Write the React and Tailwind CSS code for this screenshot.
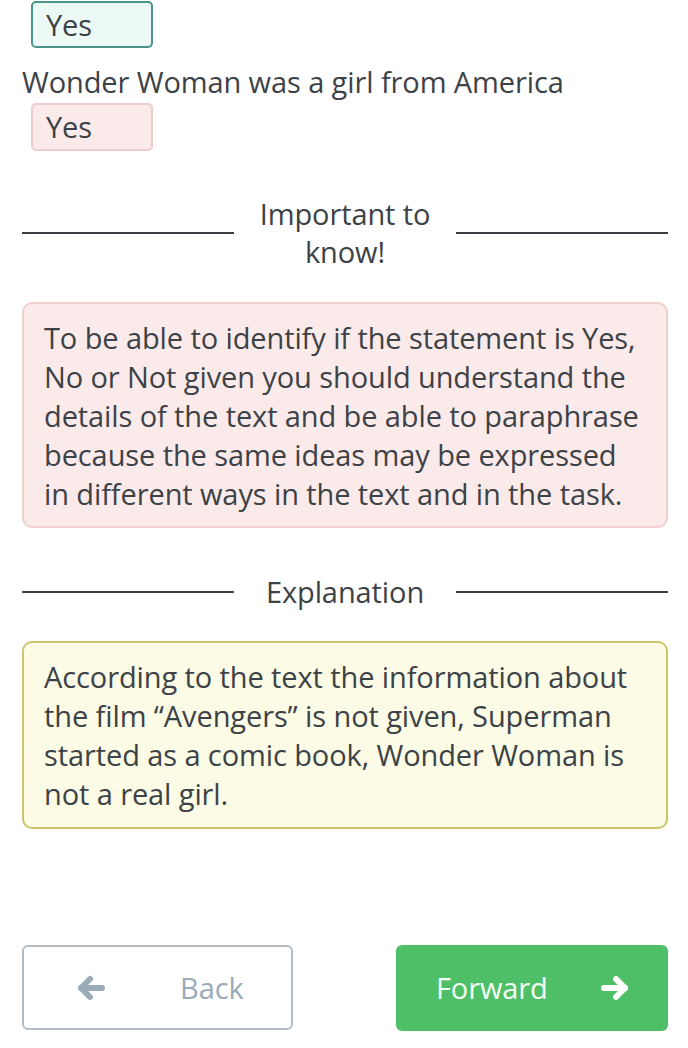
import React from "react";

function Arrow({ dir = "left", className = "" }) {
  return (
    <svg viewBox="0 0 30 26" className={className} fill="none" stroke="currentColor" strokeWidth="6" strokeLinecap="round" strokeLinejoin="round">
      {dir === "left" ? (
        <>
          <path d="M5 13 H26" />
          <path d="M14 4 L5 13 L14 22" />
        </>
      ) : (
        <>
          <path d="M25 13 H4" />
          <path d="M16 4 L25 13 L16 22" />
        </>
      )}
    </svg>
  );
}

function Divider({ children }) {
  return (
    <div className="flex items-center gap-[21px]">
      <div className="h-[2px] flex-1 bg-[#3a3f44]" />
      <div className="w-[180px] text-center text-[29px] leading-[38px] text-[#3d4247]">{children}</div>
      <div className="h-[2px] flex-1 bg-[#3a3f44]" />
    </div>
  );
}

export default function App() {
  return (
    <div
      className="w-[688px] h-[1048px] bg-white overflow-hidden pl-[22px] pr-[20px] text-[#3d4247] tracking-[-0.1px]"
      style={{ fontFamily: '"Open Sans", "Noto Sans", sans-serif' }}
    >
      <div className="ml-[9px] mt-px flex h-[47px] w-[122px] items-center rounded-[5px] border-2 border-[#4a958a] bg-[#ecf9f4] pl-[13px] text-[29px]">
        Yes
      </div>
      <div className="mt-[15px] text-[29px] leading-[38px]">Wonder Woman was a girl from America</div>
      <div className="ml-[9px] mt-[2px] flex h-[48px] w-[122px] items-center rounded-[5px] border-2 border-[#f1cccc] bg-[#fbeaea] pl-[13px] text-[29px]">
        Yes
      </div>

      <div className="mt-[44px]">
        <Divider>Important to know!</Divider>
      </div>

      <div className="mt-[31px] rounded-[10px] border-2 border-[#f1cfcf] bg-[#fbeaea] px-[20px] pt-[14px] pb-[13px] text-[29px] leading-[39px]">
        To be able to identify if the statement is Yes, No or Not given you should understand the details of the text and be able to paraphrase because the same ideas may be expressed in different ways in the text and in the task.
      </div>

      <div className="mt-[45px]">
        <Divider>Explanation</Divider>
      </div>

      <div className="mt-[30px] rounded-[10px] border-2 border-[#cdc46a] bg-[#fbfbe6] px-[20px] pt-[14px] pb-[14px] text-[29px] leading-[39px]">
        According to the text the information about the film “Avengers” is not given, Superman started as a comic book, Wonder Woman is not a real girl.
      </div>

      <div className="mt-[116px] flex justify-between">
        <button className="flex h-[85px] w-[271px] items-center rounded-[6px] border-2 border-[#b3bcc4] bg-white pl-[52px] text-[29px] text-[#9aabb9]">
          <Arrow dir="left" className="h-[26px] w-[30px]" />
          <span className="ml-[74px]">Back</span>
        </button>
        <button className="flex h-[86px] w-[272px] items-center rounded-[6px] bg-[#4fbf67] pl-[40px] text-[29px] text-[#f4fff5]">
          <span>Forward</span>
          <Arrow dir="right" className="ml-[52px] h-[26px] w-[30px] text-white" />
        </button>
      </div>
    </div>
  );
}
